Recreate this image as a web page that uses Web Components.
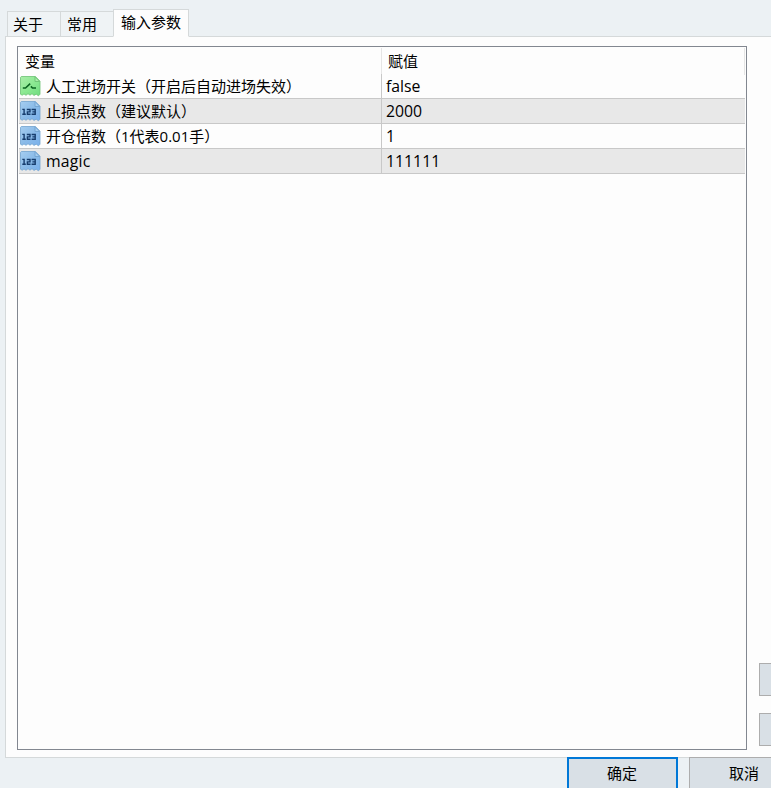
<!DOCTYPE html>
<html lang="zh-CN"><head><meta charset="utf-8"><title>输入参数</title>
<style>
html,body{margin:0;height:100%;overflow:hidden}
body{background:#ecf1f4;color:#000;font:15px/24px "Open Sans","Noto Sans CJK SC",sans-serif}
.latin{font-size:15.8px}
.wide{letter-spacing:.2px}
</style></head><body>
<settings-dialog>
  <dialog-tab slot="tab">关于</dialog-tab>
  <dialog-tab slot="tab" style="padding-left:6px">常用</dialog-tab>
  <dialog-tab slot="tab" active>输入参数</dialog-tab>
  <param-table>
    <param-row kind="flag"><span>人工进场开关（开启后自动进场失效）</span><span slot="value" class="latin">false</span></param-row>
    <param-row shaded><span>止损点数（建议默认）</span><span slot="value" class="latin">2000</span></param-row>
    <param-row><span>开仓倍数（1代表0.01手）</span><span slot="value" class="latin">1</span></param-row>
    <param-row shaded><span class="latin wide">magic</span><span slot="value" class="latin">111111</span></param-row>
  </param-table>
  <push-button slot="side"></push-button>
  <push-button slot="side"></push-button>
  <push-button slot="action" primary>确定</push-button>
  <push-button slot="action">取消</push-button>
</settings-dialog>
<script>
const define=(name,html)=>customElements.define(name,class extends HTMLElement{
  constructor(){super();this.attachShadow({mode:'open'}).innerHTML=typeof html==='function'?html(this):html;}
});
define('settings-dialog',`<style>
:host{display:flex;flex-direction:column;width:771px;height:788px;overflow:hidden}
nav{display:flex;align-items:flex-end;height:37px;box-sizing:border-box;padding-left:7px;flex:none;position:relative;z-index:1}
main{display:flex;box-sizing:border-box;height:722px;flex:none;margin:-1px 0 0 5px;padding:9px 0 7px 11px;border:1px solid #d5d9da;border-right:0;background:#fdfdfd;gap:12px}
aside{display:flex;flex-direction:column;justify-content:flex-end;gap:17px;padding-bottom:4px;flex:1}
aside ::slotted(*){width:60px;height:33px}
footer{display:flex;margin:-1px 0 0 567px;height:40px;position:relative}
.actions{display:flex;gap:11px}
.actions ::slotted(*){width:111px;height:34px}
</style><nav><slot name="tab"></slot></nav><main><slot></slot><aside><slot name="side"></slot></aside></main><footer><div class="actions"><slot name="action"></slot></div></footer>`);
define('dialog-tab',`<style>
:host{display:block;box-sizing:border-box;height:26px;width:53px;border:1px solid #d5d9da;border-right:0;padding-left:5px;background:#eff3f5;white-space:nowrap}
:host([active]){width:76px;height:28px;border-right:1px solid #d5d9da;border-bottom-color:#fdfdfd;background:#fdfdfd;padding-left:7px}
</style><slot></slot>`);
define('param-table',`<style>
:host{display:block;box-sizing:border-box;width:730px;height:704px;flex:none;border:1px solid #828790;padding:1px;background:#fdfdfd}
header{display:grid;grid-template-columns:363px 363px;height:26px;line-height:27px}
header span{border-right:1px solid #e5e5e5;padding-left:6px}
</style><header><span>变量</span><span>赋值</span></header><slot></slot>`);
const page=(a,b,c,stroke,mark)=>`<svg width="22" height="22" viewBox="0 0 22 22"><defs><linearGradient id="g" x1="0" y1="0" x2="1" y2="1"><stop stop-color="${a}"/><stop offset=".5" stop-color="${b}"/><stop offset="1" stop-color="${c}"/></linearGradient></defs><path d="M2.3 1.5h14l4.7 4.7v13l-1.5 1.6-2.3-1.6-2.2 1.2-2-1.7-2 1.5-2-1.5-2 1.6-2-1.4-1.8 1.3-1.7-1V2.3z" fill="url(#g)" stroke="${stroke}" stroke-width=".8"/><path d="M16 1.7v4.8h4.8z" fill="${a}" stroke="${stroke}" stroke-width=".9"/>${mark}</svg>`;
const flag=page('#a9eda9','#8ce992','#6fdc80','#6cc274','<path d="M3.8 13h2.7l4.7-4.3M11.9 11.4l1.6 1.6H17" fill="none" stroke="#0b6421" stroke-width="1.6"/>');
const number=page('#a5cdf0','#8bbbe8','#79b0ec','#72a3cf','<path d="M3.3 9.4h1.8v5.5M3.3 14.3h3.5M7.8 9.5h3.2v2.4H8.4v2.4h3.1M12.6 9.5h3.6v4.8h-3.6M13.4 11.9h2.6" fill="none" stroke="#173d6d" stroke-width="1.4"/>');
define('param-row',el=>`<style>
:host{display:grid;grid-template-columns:363px 363px;height:25px;line-height:24px;white-space:nowrap}
div{display:flex;box-sizing:border-box;border-bottom:1px solid #c8c8c8}
.name{border-right:1px solid #c8c8c8;gap:5px}
.value{padding-left:4px}
svg{display:block;flex:none;margin-top:1px}
:host([shaded]) div{background:#e8e8e8}
</style><div class="name">${el.getAttribute('kind')==='flag'?flag:number}<slot></slot></div><div class="value"><slot name="value"></slot></div>`);
define('push-button',`<style>
:host{display:block;box-sizing:border-box;background:#d9e0e6;border:1px solid #adadad;text-align:center;line-height:31px;padding-right:1px}
:host([primary]){border:2px solid #0078d7;line-height:29px}
</style><slot></slot>`);
</script></body></html>
